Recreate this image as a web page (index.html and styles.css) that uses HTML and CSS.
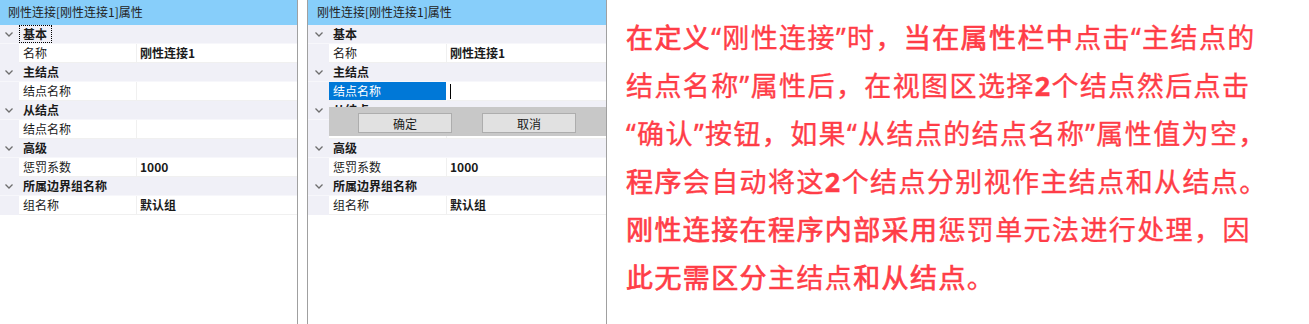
FILE: index.html
```html
<!DOCTYPE html>
<html lang="zh-CN">
<head>
    <meta charset="UTF-8">
    <meta name="viewport" content="width=device-width, initial-scale=1.0">
    <title>刚性连接属性</title>
    <link rel="stylesheet" href="styles.css">
</head>
<body>
    <div class="page">
        <div class="grid grid-left">
            <div class="grid-title">刚性连接[刚性连接1]属性</div>
            <div class="cat"><span class="gutter"><svg class="chev" width="8" height="5" viewBox="0 0 8 5"><polyline points="0.5,0.5 4,4 7.5,0.5"/></svg></span><span class="cat-label focus">基本</span></div>
            <div class="prop"><span class="gutter"></span><span class="name">名称</span><span class="value">刚性连接1</span></div>
            <div class="cat"><span class="gutter"><svg class="chev" width="8" height="5" viewBox="0 0 8 5"><polyline points="0.5,0.5 4,4 7.5,0.5"/></svg></span><span class="cat-label">主结点</span></div>
            <div class="prop"><span class="gutter"></span><span class="name">结点名称</span><span class="value"></span></div>
            <div class="cat"><span class="gutter"><svg class="chev" width="8" height="5" viewBox="0 0 8 5"><polyline points="0.5,0.5 4,4 7.5,0.5"/></svg></span><span class="cat-label">从结点</span></div>
            <div class="prop"><span class="gutter"></span><span class="name">结点名称</span><span class="value"></span></div>
            <div class="cat"><span class="gutter"><svg class="chev" width="8" height="5" viewBox="0 0 8 5"><polyline points="0.5,0.5 4,4 7.5,0.5"/></svg></span><span class="cat-label">高级</span></div>
            <div class="prop"><span class="gutter"></span><span class="name">惩罚系数</span><span class="value">1000</span></div>
            <div class="cat"><span class="gutter"><svg class="chev" width="8" height="5" viewBox="0 0 8 5"><polyline points="0.5,0.5 4,4 7.5,0.5"/></svg></span><span class="cat-label">所属边界组名称</span></div>
            <div class="prop"><span class="gutter"></span><span class="name">组名称</span><span class="value">默认组</span></div>
        </div>

        <div class="grid grid-right">
            <div class="grid-title">刚性连接[刚性连接1]属性</div>
            <div class="cat"><span class="gutter"><svg class="chev" width="8" height="5" viewBox="0 0 8 5"><polyline points="0.5,0.5 4,4 7.5,0.5"/></svg></span><span class="cat-label">基本</span></div>
            <div class="prop"><span class="gutter"></span><span class="name">名称</span><span class="value">刚性连接1</span></div>
            <div class="cat"><span class="gutter"><svg class="chev" width="8" height="5" viewBox="0 0 8 5"><polyline points="0.5,0.5 4,4 7.5,0.5"/></svg></span><span class="cat-label">主结点</span></div>
            <div class="prop selected"><span class="gutter"></span><span class="name">结点名称</span><span class="value"><span class="caret"></span></span></div>
            <div class="cat"><span class="gutter"><svg class="chev" width="8" height="5" viewBox="0 0 8 5"><polyline points="0.5,0.5 4,4 7.5,0.5"/></svg></span><span class="cat-label">从结点</span></div>
            <div class="prop"><span class="gutter"></span><span class="name">结点名称</span><span class="value"></span></div>
            <div class="cat"><span class="gutter"><svg class="chev" width="8" height="5" viewBox="0 0 8 5"><polyline points="0.5,0.5 4,4 7.5,0.5"/></svg></span><span class="cat-label">高级</span></div>
            <div class="prop"><span class="gutter"></span><span class="name">惩罚系数</span><span class="value">1000</span></div>
            <div class="cat"><span class="gutter"><svg class="chev" width="8" height="5" viewBox="0 0 8 5"><polyline points="0.5,0.5 4,4 7.5,0.5"/></svg></span><span class="cat-label">所属边界组名称</span></div>
            <div class="prop"><span class="gutter"></span><span class="name">组名称</span><span class="value">默认组</span></div>

            <div class="pick-bar">
                <button class="btn">确定</button>
                <button class="btn">取消</button>
            </div>
        </div>

        <div class="note">
            <b>在定义</b>“刚性连接”时，<b>当在属性栏中</b>点击“主结点的<br>
            结点名称”属性后，在视图区选择<strong>2</strong>个结点然后点击<br>
            “确认”按钮，如果“从结点的结点名称”属性值为空，<br>
            <b>程序</b>会自动将这<strong>2</strong>个结点分别视作主结点和从结点。<br>
            <b>刚性连接在程序内部采用</b>惩罚单元法进行处理，因<br>
            <b>此无需区分</b>主结点<b>和从结点</b>。
        </div>
    </div>
</body>
</html>
```

FILE: styles.css
```css
* {
    margin: 0;
    padding: 0;
    box-sizing: border-box;
}
body {
    font-family: "Noto Sans CJK SC", "Noto Sans", sans-serif;
    background-color: #fff;
    overflow: hidden;
}
.page {
    display: flex;
    height: 324px;
}

/* property grid */
.grid {
    position: relative;
    flex: none;
    width: 300px;
    height: 324px;
    font-size: 12px;
    color: #1a1a1a;
    border-right: 1px solid #a0a0a0;
}
.grid-left {
    margin-left: -2px;
}
.grid-right {
    margin-left: 9px;
    border-left: 1px solid #a0a0a0;
}
.grid-title {
    height: 25px;
    line-height: 24px;
    padding-left: 10px;
    background-color: #87cefa;
    color: #222;
}
.grid-right .grid-title {
    padding-left: 9px;
}
.cat,
.prop {
    display: flex;
    height: 19px;
    line-height: 18px;
}
.cat {
    background-color: #f0f0f7;
    border-bottom: 1px solid #f7f7fb;
}
.gutter {
    width: 21px;
    flex: none;
    display: flex;
    align-items: center;
    justify-content: center;
    background-color: #f0f0f7;
}
.chev {
    fill: none;
    stroke: #6e6e6e;
    stroke-width: 1.3;
}
.cat-label {
    font-weight: bold;
    padding: 0 4px 0 3px;
    border: 1px dotted transparent;
    line-height: 16px;
}
.cat-label.focus {
    border-color: #000;
}
.prop .name,
.prop .value {
    background-color: #fff;
    border-bottom: 1px solid #f0f0f0;
}
.prop .name {
    width: 118px;
    flex: none;
    padding-left: 4px;
    border-right: 1px solid #f0f0f0;
}
.prop .value {
    flex: 1;
    padding-left: 3px;
    font-weight: bold;
}
.prop.selected .name {
    background-color: #0078d7;
    color: #fff;
    border-right-color: #fff;
}
.caret {
    display: inline-block;
    width: 1px;
    height: 15px;
    margin-top: 2px;
    vertical-align: top;
    background-color: #000;
}

/* node pick bar over the grid */
.pick-bar {
    position: absolute;
    top: 107px;
    left: 21px;
    right: 0;
    height: 29px;
    display: flex;
    gap: 30px;
    padding: 6px 0 0 29px;
    background-color: #c8c8c8;
}
.btn {
    width: 94px;
    height: 20px;
    font-family: inherit;
    font-size: 12px;
    color: #1a1a1a;
    background-color: #e1e1e1;
    border: 1px solid #adadad;
}

/* explanation text */
.note {
    margin-left: 19px;
    padding-top: 14px;
    font-family: "Noto Sans", "Noto Sans CJK SC", sans-serif;
    font-size: 27px;
    line-height: 48px;
    letter-spacing: 1.4px;
    color: #ff3d47;
    white-space: nowrap;
    -webkit-text-stroke: 0.35px #ff3d47;
}
.note b {
    font-weight: normal;
    -webkit-text-stroke: 0.7px #ff3d47;
}
.note strong {
    font-weight: bold;
}
```
